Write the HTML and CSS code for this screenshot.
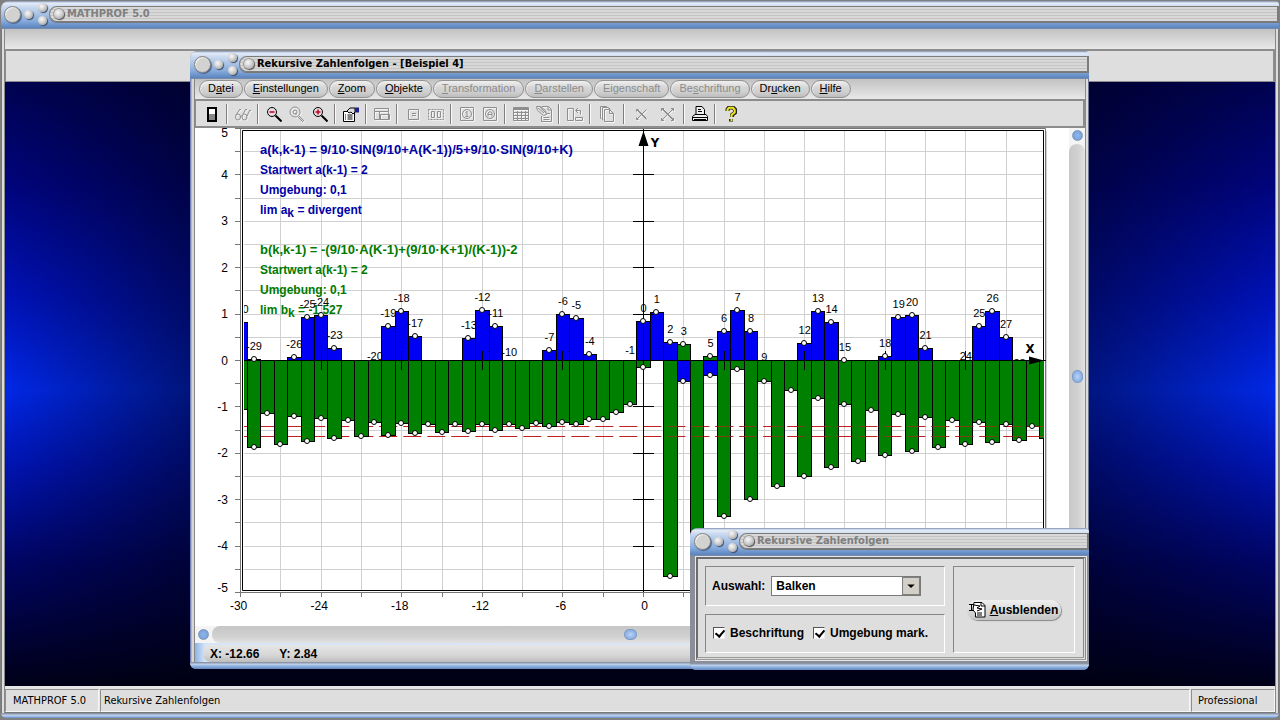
FILE: index.html
```html
<!DOCTYPE html>
<html lang="de">
<head>
<meta charset="utf-8">
<title>MATHPROF 5.0</title>
<link rel="stylesheet" href="styles.css">
</head>
<body>
<div class="desktop">
  <header class="titlebar inactive">
    <button class="orb big" aria-label="Schließen"></button>
    <button class="orb" aria-label="Minimieren"></button>
    <span class="orb-pair"><button class="orb" aria-label="Maximieren"></button><button class="orb" aria-label="Wiederherstellen"></button></span>
    <div class="caption"><span class="orb knob"></span><h1>MATHPROF 5.0</h1></div>
  </header>
  <div class="frame">
    <div class="menubar main-menu"></div>
    <div class="main-tools"></div>
    <main class="mdi"></main>
    <footer class="statusbar">
      <span class="cell first">MATHPROF 5.0</span>
      <span class="cell wide">Rekursive Zahlenfolgen</span>
      <span class="cell last">Professional</span>
    </footer>
  </div>
  <div class="window-foot"></div>
</div>

<section class="window plot-window">
  <header class="titlebar">
    <button class="orb big" aria-label="Schließen"></button>
    <button class="orb" aria-label="Minimieren"></button>
    <span class="orb-pair"><button class="orb" aria-label="Maximieren"></button><button class="orb" aria-label="Wiederherstellen"></button></span>
    <div class="caption"><span class="orb knob"></span><h2>Rekursive Zahlenfolgen - [Beispiel 4]</h2></div>
  </header>
  <div class="window-body">
    <nav class="menubar">
      <button>D<u>a</u>tei</button><button><u>E</u>instellungen</button><button><u>Z</u>oom</button><button><u>O</u>bjekte</button><button disabled><u>T</u>ransformation</button><button disabled><u>D</u>arstellen</button><button disabled>Ei<u>g</u>enschaft</button><button disabled>Be<u>s</u>chriftung</button><button>Dr<u>u</u>cken</button><button><u>H</u>ilfe</button>
    </nav>
    <div class="toolbar">
      <button aria-label="Beenden"><svg viewBox="0 0 16 16"><rect x="3" y="1" width="10" height="15" fill="#000"/><rect x="5" y="3" width="6" height="5" fill="#fff"/><rect x="5" y="8" width="6" height="6" fill="#888"/></svg></button>
      <i></i>
      <button aria-label="Anzeigen"><svg class="dim" viewBox="0 0 16 16"><ellipse cx="3" cy="11" rx="2.5" ry="3"/><ellipse cx="9.500" cy="11" rx="2.500" ry="3"/><path d="M1 9l4-6 1 1M8 8l3-5 1 1M5.500 10h1.500M12 10l3-6 1 1"/></svg></button>
      <i></i>
      <button aria-label="Verkleinern"><svg viewBox="0 0 16 16"><circle cx="6" cy="6" r="4.500" fill="#e8dce0" stroke="#000"/><path d="M3.500 6h5" stroke="#c00020" stroke-width="1.500"/><path d="M9.500 9.500l6 6" stroke="#000" stroke-width="2"/></svg></button>
      <button aria-label="Lupe"><svg class="dim" viewBox="0 0 16 16"><circle cx="6" cy="6" r="5"/><circle cx="6" cy="6" r="2"/><path d="M7 7v2M10 10l5 5M9 11l5 5"/></svg></button>
      <button aria-label="Vergrößern"><svg viewBox="0 0 16 16"><circle cx="6" cy="6" r="4.500" fill="#e8dce0" stroke="#000"/><path d="M3.500 6h5M6 3.500v5" stroke="#c00020" stroke-width="1.500"/><path d="M9.500 9.500l6 6" stroke="#000" stroke-width="2"/></svg></button>
      <i></i>
      <button aria-label="Eigenschaften"><svg viewBox="0 0 16 16"><path d="M.5 5.500h11v10H.5z" fill="#fff" stroke="#000"/><path d="M2 9h1M4.500 9h5M2 11h1M4.500 11h5M2 13h1M4.500 13h5" stroke="#000"/><path d="M4 5l3-3h5v4l-2 2-2-2-2 1-2-2" fill="#ddd" stroke="#000"/><path d="M12 1.500h4v5h-4z" fill="#20208c"/></svg></button>
      <i></i>
      <button aria-label="Fenster"><svg class="dim" viewBox="0 0 16 16"><path d="M.5 2.500h14v11H.5zM.5 5.500h14M5.500 5.500v8"/><path d="M6.500 8.500h9v5h-9z"/></svg></button>
      <i></i>
      <button aria-label="Punkt"><svg class="dim" viewBox="0 0 16 16"><path d="M3.500 3.500h10v10h-10zM7 7.500h4M7 9.500h4"/></svg></button>
      <button aria-label="Punktpaar"><svg class="dim" viewBox="0 0 16 16"><path d="M.5 3.500h15v10H.5z" stroke-dasharray="2 1"/><path d="M3.500 5.500h3v6h-3zM9.500 5.500h3v6h-3z"/></svg></button>
      <i></i>
      <button aria-label="Info"><svg class="dim" viewBox="0 0 16 16"><path d="M1.500 1.500h13v13h-13z"/><circle cx="8" cy="8" r="4.500"/><path d="M8 5v6M6.500 6.500L8 5.500M6.500 10.500h3"/></svg></button>
      <button aria-label="Text"><svg class="dim" viewBox="0 0 16 16"><path d="M1.500 1.500h13v13h-13z"/><circle cx="8" cy="8" r="4.500"/><path d="M6 10.500V7l2-1.500L10 7v3.500M6 8.500h4"/></svg></button>
      <i></i>
      <button aria-label="Tabelle"><svg class="dim" viewBox="0 0 16 16"><path d="M.5 1.500h15v13H.5z"/><path d="M1 3h14" stroke-width="2"/><path d="M1 6.500h14M1 9.500h14M1 12.500h14M4.500 5v9M8.500 5v9M12.500 5v9"/></svg></button>
      <button aria-label="Protokoll"><svg class="dim" viewBox="0 0 16 16"><path d="M6 .5h6.500l3 3v12H5.500V10"/><path d="M.5 .5h4l5 4 1 4-3 1-6-5zM2 2l6 5M4 1l6 6M7.500 11.500h6M7.500 13.500h6M12 1v3h3M11 7.500h3"/></svg></button>
      <i></i>
      <button aria-label="Drehen"><svg class="dim" viewBox="0 0 16 16"><path d="M.5 2.500h6v12h-6zM8.500 11.500h7v3h-7zM9 4.500h4.500v4M11 2L8.500 4.500 11 7"/></svg></button>
      <i></i>
      <button class="roomy" aria-label="Kopieren"><svg class="dim" viewBox="0 0 16 16"><path d="M2.500 12.500h-1V.5h6l2 2M4.500 14h-1V1.500h6l2 2M5.500 3.500h5l4 4v8h-9zM10.500 3.500v4h4"/></svg></button>
      <i></i>
      <button class="roomy" aria-label="Löschen"><svg class="dim" viewBox="0 0 16 16"><path d="M3.500 3.500l10 10M13.500 3.500l-10 10M4.500 3.500l9 9M3.500 5.500v-2h2M3.500 11.500v2h2"/></svg></button>
      <button class="roomy" aria-label="Alles löschen"><svg class="dim" viewBox="0 0 16 16"><path d="M2.500 2.500l12 12M14.500 2.500l-12 12M3.500 2.500l11 11M2.500 5v-2.500H5M12 2.500h2.500V5M2.500 12v2.500H5M12 14.500h2.500V12"/></svg></button>
      <i></i>
      <button aria-label="Drucken"><svg viewBox="0 0 16 16"><path d="M4 8V.5h6l2.500 3V8M.5 10.500L3 8.500h11l1.500 2v4H.5zM.5 11.500h15" fill="#eee" stroke="#000"/><path d="M6 3.500h3M6 5.500h4M2 13.500h12" stroke="#000"/></svg></button>
      <i></i>
      <button aria-label="Hilfe"><svg viewBox="0 0 16 16"><path d="M4.500 5V3.500L6 1.500h4l2 2v3L9 9v2M8 13v2.500" fill="none" stroke="#222" stroke-width="4"/><path d="M4.500 5V3.500L6 1.800h4l1.700 2v2.500L8.500 9v2M8.500 13v2" fill="none" stroke="#f0e818" stroke-width="2"/></svg></button>
    </div>
    <div class="plot-area">
      <svg class="chart" id="chart" viewBox="195 128 874 498" role="img" aria-label="Balkendiagramm rekursiver Zahlenfolgen"></svg>
      <div class="vscroll"><span class="ball"></span><div class="track"><span class="thumb"></span></div></div>
    </div>
    <div class="hscroll"><span class="ball"></span><div class="track"><span class="thumb"></span></div></div>
    <div class="coords"><div class="coords-pill"><span>X: -12.66</span><span>Y: 2.84</span></div></div>
  </div>
  <div class="window-foot"></div>
</section>

<section class="window dialog">
  <header class="titlebar inactive">
    <button class="orb big" aria-label="Schließen"></button>
    <button class="orb" aria-label="Minimieren"></button>
    <span class="orb-pair"><button class="orb" aria-label="Maximieren"></button><button class="orb" aria-label="Wiederherstellen"></button></span>
    <div class="caption"><span class="orb knob"></span><h2>Rekursive Zahlenfolgen</h2></div>
  </header>
  <form class="dialog-body">
    <div class="groups">
      <div class="group">
        <label for="kind">Auswahl:</label>
        <span class="select-box">
          <select id="kind"><option>Balken</option></select>
          <svg class="drop" viewBox="0 0 17 17"><path d="M.5 .5h16v16H.5z" fill="#d4d0c8" stroke="#808080"/><path d="M5 7h7L8.500 10.500z" fill="#000"/></svg>
        </span>
      </div>
      <div class="group">
        <input type="checkbox" id="lab" checked><label for="lab">Beschriftung</label>
        <input type="checkbox" id="env" checked><label for="env">Umgebung mark.</label>
      </div>
    </div>
    <div class="group side">
      <button type="button" class="hide-button"><svg viewBox="0 0 17 17"><path d="M5 1.500h8l3 3v11.500H6.500V12L4 9z" fill="#fff" stroke="#000"/><path d="M0 3.500h5M2.500 3.500v6M0 9.500h5M5 4l6 1-3 2 5 1-5 2M8 12h5M8 14h5M12 2v3h4" fill="none" stroke="#000"/></svg><span><u>A</u>usblenden</span></button>
    </div>
  </form>
  <div class="window-foot"></div>
</section>
<script src="chart.js"></script>
</body>
</html>
```

FILE: styles.css
```css
* { box-sizing: border-box; }
:root {
  --ui: "DejaVu Sans Condensed", "DejaVu Sans", sans-serif;
  --sans: "Liberation Sans", Arial, sans-serif;
  --face: #dedede;
}
body { margin: 0; height: 100vh; overflow: hidden; background: #808080; font: 11px/14px var(--sans); color: #000; }
button { font: inherit; color: inherit; margin: 0; }
h1, h2 { margin: 0; font: bold 11px/14px var(--ui); white-space: nowrap; }

.desktop { height: 100vh; padding: 1px 1px 2px 1px; display: flex; flex-direction: column; }
.frame { flex: 1; min-height: 0; display: flex; flex-direction: column; margin: 0; padding: 0 4px; background: linear-gradient(90deg, #777 0 1px, #ddd 1px 3px, #888 3px 4px, transparent 4px calc(100% - 4px), #888 calc(100% - 4px) calc(100% - 3px), #ddd calc(100% - 3px) calc(100% - 1px), #777 calc(100% - 1px)); }

.titlebar { flex: none; height: 28px; display: flex; align-items: center; padding: 0 0 2px 3px; border-radius: 8px 4px 0 0;
  background: linear-gradient(#7d8fb0 0, #e4edf9 2px, #c9d9ef 6px, #a9c2e4 13px, #86abdb 20px, #668fc8 25px, #5e83b8 27px, #8a93a4 28px); }
.orb { flex: none; width: 9px; height: 9px; padding: 0; border: 0; border-radius: 50%; background: radial-gradient(circle at 40% 35%, #f8f8f8, #d0d0d0 45%, #8c8c8c); box-shadow: 1px 1px 1px #3c4c68; }
.orb.big { width: 17px; height: 17px; margin-right: 3px; background: #d2d2d0; border: 1px solid #858585; box-shadow: inset 1px 1px 1px #f2f2f2, 1px 1px 1px #48608a; }
.orb-pair { display: flex; flex-direction: column; gap: 4px; margin: 0 2px 0 5px; }
.caption { flex: 1; min-width: 0; height: 16px; display: flex; align-items: center; gap: 3px; padding-left: 4px; border: 1px solid #7c7c7c; border-right-width: 2px; border-radius: 8px 0 0 8px; background: repeating-linear-gradient(#d8d8d8 0 2px, #c4c4c4 2px 3px); box-shadow: 0 1px 0 #777; }
.orb.knob { width: 10px; height: 10px; box-shadow: 1px 1px 1px #555, 0 0 0 1px #999; }
.inactive h1, .inactive h2 { color: #7f7f7f; }

.menubar { flex: none; height: 20px; display: flex; align-items: center; padding-left: 4px; background: linear-gradient(#c2c2c2, #e8e8e8); }
.menubar button { height: 18px; padding: 0 8px 2px; border: 1px solid #929292; border-radius: 9px; background: linear-gradient(#f0f0f0, #d6d6d6 40%, #cfcfcf 70%, #bdbdbd); box-shadow: inset 1px 1px 0 #eee; line-height: 14px; }
.menubar button + button { margin-left: 1px; }
.menubar button:disabled { color: #8c8c8c; }
.main-tools { flex: none; height: 33px; background: var(--face); border: 2px solid #8c8c8c; border-bottom-width: 1px; border-left-width: 1px; }
.mdi { flex: 1; min-height: 0; background:
  linear-gradient(90deg, rgba(0, 0, 12, 0) 0, rgba(0, 0, 12, .5) 15%, rgba(0, 0, 12, .5) 84%, rgba(0, 0, 12, 0) 100%),
  linear-gradient(#000250 0, #00047c 17%, #0012b8 36%, #0028e6 51%, #0014b4 63%, #000462 80%, #000018 100%); }
.statusbar { flex: none; height: 27px; display: flex; gap: 1px; padding: 3px 0 0; background: #e6e6e6; border-bottom: 1px solid #777; font: 11px/14px var(--ui); }
.cell { display: flex; align-items: center; background: var(--face); border: 1px solid #909090; border-color: #909090 #f6f6f6 #f6f6f6 #909090; padding: 0 6px; white-space: nowrap; }
.cell.first { width: 94px; padding-left: 7px; }
.cell.wide { flex: 1; padding-left: 3px; }
.cell.last { width: 84px; }
.window-foot { flex: none; height: 7px; border-radius: 0 0 6px 6px; background: linear-gradient(#8b95a8 0 1px, #c3d7f0 2px, #92b3df 4px, #6288bf); }
.desktop .window-foot { height: 5px; }

.window { position: absolute; display: flex; flex-direction: column; border-radius: 8px 6px 6px 6px; background: #8b8d98; }
.plot-window { left: 190px; top: 51px; width: 899px; height: 618px; }
.window .titlebar { padding-left: 4px; }
.window-body { flex: 1; min-height: 0; display: flex; flex-direction: column; padding: 0 4px 0 5px; background: linear-gradient(90deg, #7482b8 0 1px, #aeb4cc 1px 2px, #d6d6d6 2px 4px, #868686 4px 5px, transparent 5px calc(100% - 4px), #8a8a8a calc(100% - 4px) calc(100% - 3px), #ddd calc(100% - 3px) calc(100% - 1px), #6c7694 calc(100% - 1px)); }
.toolbar { flex: none; height: 29px; display: flex; align-items: center; padding: 0 0 0 4px; background: var(--face); border: solid #8c8c8c; border-width: 2px 2px 2px 1px; }
.toolbar button { flex: none; width: 23px; height: 22px; padding: 0; border: 0; background: none; display: flex; align-items: center; justify-content: center; }
.toolbar .roomy { width: 26px; }
.toolbar svg { width: 16px; height: 16px; }
.toolbar i { flex: none; width: 8px; height: 20px; background: linear-gradient(90deg, transparent 3px, #7e7e7e 3px 4px, #fafafa 4px 5px, transparent 5px); }
.dim { fill: none; stroke: #8e8e8e; filter: drop-shadow(1px 1px 0 #f4f4f4); }
.plot-area { flex: 1; min-height: 0; display: flex; background: #fff; }
.chart { flex: 1; min-width: 0; height: 100%; display: block; }
.vscroll { flex: none; width: 16px; display: flex; flex-direction: column; align-items: center; padding-top: 2px; gap: 3px; background: #f4f4f4; }
.vscroll .track { flex: 1; width: 100%; display: flex; justify-content: center; align-items: center; border-radius: 8px 8px 0 0; background: linear-gradient(90deg, #c8c8c8, #d2d2d2 60%, #e2e2e2); }
.ball { flex: none; width: 11px; height: 11px; border-radius: 50%; border: 1px solid #8296b4; background: radial-gradient(#8db8ee, #7099d4); }
.thumb { width: 11px; height: 13px; border-radius: 5px; border: 1px solid #7f9cc6; background: radial-gradient(#b8d4f8, #779fd8); }
.vscroll .track { padding-bottom: 18px; }
.hscroll { flex: none; height: 17px; display: flex; align-items: center; padding-left: 3px; gap: 3px; background: #f4f4f4; }
.hscroll .track { flex: 1; height: 100%; display: flex; align-items: center; justify-content: center; padding-right: 36px; border-radius: 8px 0 0 8px; background: linear-gradient(#c6c6c6, #d0d0d0 60%, #e2e2e2); }
.hscroll .thumb { width: 13px; height: 11px; }
.coords { flex: none; height: 19px; padding: 2px 0 0 8px; background: linear-gradient(90deg, #8fb4e4, #d5e5f7 10px, #dce6f2); }
.coords-pill { height: 17px; display: flex; align-items: center; gap: 20px; padding-left: 7px; border-radius: 8px 0 0 8px; background: linear-gradient(#e6e6e6, #d6d6d6 60%, #bdbdbd); font: bold 12px/14px var(--sans); }

.dialog { left: 690px; top: 528px; width: 399px; height: 142px; }
.dialog-body { flex: 1; min-height: 0; display: flex; gap: 8px; margin: 1px 3px 3px 6px; padding: 7px 8px 4px 7px; background: var(--face); border: 2px solid #6c6c6c; border-right: 3px double #888; border-bottom: 3px double #999; outline: 1px solid #e8e8e8; font: bold 12px/14px var(--sans); }
.groups { flex: 1; display: flex; flex-direction: column; gap: 8px; }
.group { flex: 1; display: flex; align-items: center; padding-left: 6px; border: 1px solid #868686; border-right-color: #fff; border-bottom-color: #fff; white-space: nowrap; }
.group.side { flex: none; width: 122px; padding: 0; justify-content: center; }
.select-box { position: relative; width: 150px; height: 20px; margin-left: 6px; }
.select-box select { appearance: none; width: 100%; height: 20px; padding: 0 4px; border: 1px solid #7a7a7a; border-radius: 0; background: #fff; color: #000; font: inherit; }
.drop { position: absolute; right: 1px; top: 1px; width: 18px; height: 18px; pointer-events: none; }
.group input { appearance: none; width: 12px; height: 12px; margin: 0 5px 0 1px; border: 1px solid #555; border-color: #555 #eee #eee #555; background: #fff; position: relative; }
.group input:checked::after { content: ""; position: absolute; left: 3px; top: 0; width: 4px; height: 7px; border: solid #000; border-width: 0 2px 2px 0; transform: rotate(40deg); }
.group label + input { margin-left: 9px; }
.hide-button { display: flex; align-items: center; gap: 4px; height: 20px; padding: 0 3px 0 2px; border: 0; border-radius: 10px; background: linear-gradient(#f0f0f0, #dadada 50%, #c4c4c4); box-shadow: 1px 1px 1px #888; }
.hide-button svg { width: 17px; height: 17px; }

.chart text { font: 11px var(--sans); text-anchor: middle; }
.chart .scale text { font-size: 12px; }
.chart .rows text { text-anchor: end; }
.chart .formula { font: bold 12px var(--sans); text-anchor: start; }
.chart .long { font-size: 13px; }
.chart .a { fill: #0000a8; }
.chart .b { fill: #007a00; }
.chart .name { font: bold 13px var(--ui); }
.grid { stroke: #d0d0d0; }
.ticks { stroke: #777; }
.axis { stroke: #000; }
.blue { fill: #0000f4; stroke: #000; }
.green { fill: #008000; stroke: #000; }
.dot { fill: #fff; stroke: #000; }
.limit { stroke: #c02020; stroke-dasharray: 18 6; }
```

FILE: chart.js
```js
const X0 = 643.5, DX = 13.43, Y0 = 360.5, DY = 46.4;
const L = 244, R = 1043;
const px = k => X0 + k * DX;
const line = (x1, y1, x2, y2) => `<path d="M${x1} ${y1}L${x2} ${y2}"/>`;
const snap = v => Math.floor(v) + 0.5;

// Bar ends in drawing units, keyed by sequence index.
const a = { '-30': 322, '-29': 359, '-26': 357, '-25': 317, '-24': 315, '-23': 348, '-19': 326, '-18': 311, '-17': 336, '-13': 338, '-12': 310, '-11': 326, '-7': 350, '-6': 314, '-5': 318, '-4': 354, 0: 321, 1: 312, 2: 342, 3: 381, 5: 375, 6: 331, 7: 310, 8: 331, 12: 343, 13: 311, 14: 322, 15: 360, 18: 356, 19: 317, 20: 315, 21: 348, 25: 326, 26: 311, 27: 337 };
const b = [409, 447, 413, 444, 416, 441, 418, 438, 420, 436, 422, 435, 423, 433, 424, 432, 424, 431, 424, 430, 424, 428, 423, 426, 422, 424, 419, 419, 412, 404, 367, null, 576, 344, 640, 356, 516, 369, 499, 381, 486, 390, 476, 398, 467, 404, 461, 410, 455, 414, 451, 417, 447, 420, 444, 422, 442, 424, 440, 426, 438];

let grid = '', ticks = '', axis = '', bars = '', dots = '', labels = '';
for (let k = -30; k <= 30; k += 3) {
  const x = snap(px(k));
  grid += line(x, 131, x, 590);
  ticks += line(x, 592, x, 597);
}
for (let v = -10; v <= 10; v++) {
  const y = snap(Y0 - v * DY / 2);
  grid += line(L, y, R, y);
  ticks += line(235, y, 241, y);
}
for (let v = -4; v <= 4; v++) if (v) axis += line(633, snap(Y0 - v * DY), 654, snap(Y0 - v * DY));

const bar = (k, y, cls) => {
  const x1 = snap(px(k - 0.5)), x2 = snap(px(k + 0.5));
  bars += `<rect class="${cls}" x="${x1}" y="${Math.min(y, 360) + 0.5}" width="${x2 - x1}" height="${Math.abs(360 - y)}"/>`;
  if (Math.abs(k) < 30) dots += `<circle class="dot" cx="${Math.floor(px(k))}" cy="${y}" r="2.500"/>`;
};
for (const k in a) {
  bar(+k, a[k], 'blue');
  if (k !== '3' && k !== '5') labels += `<text x="${px(+k)}" y="${a[k] - 9}">${k}</text>`;
}
for (const [k, y] of [[-20, 360], [-16, 368], [-10, 356], [-1, 354], [3, 335], [5, 347], [9, 361], [24, 360], [28, 367]])
  labels += `<text x="${px(k)}" y="${y}">${k}</text>`;
const blueBars = bars;
bars = '';
b.forEach((y, i) => { if (y !== null) bar(i - 30, y, 'green'); });

let xt = '';
for (let k = -30; k <= 30; k += 6) {
  if (k && k < 30 && k > -30) axis += line(snap(px(k)), 351, snap(px(k)), 370);
  if (k <= 0) xt += `<text x="${px(k) - (k ? 2 : -1)}" y="610">${k}</text>`;
}
let yt = '';
for (let v = -5; v <= 5; v++)
  yt += `<text x="228" y="${Y0 - v * DY + (v === 5 ? 8 : v === -5 ? -1 : 4)}">${v}</text>`;

const f = (cls, y, t) => `<text class="formula ${cls}" x="260" y="${y}">${t}</text>`;
document.getElementById('chart').innerHTML = `
<defs><clipPath id="plot"><rect x="${L}" y="131" width="${R - L + 1}" height="460"/></clipPath>
<clipPath id="upper"><rect x="${L}" y="131" width="${R - L + 1}" height="230"/></clipPath></defs>
<g class="grid">${grid}</g><g class="ticks">${ticks}</g>
<path d="M240.500 597V128.500H1045.500V592.500H237" fill="none" stroke="#777"/>
<path d="M242.500 130.500H1043.500V590.500H242.500z" fill="none" stroke="#000"/>
<g class="limit" clip-path="url(#plot)"><path d="M235.300 426.500H1044M235.300 436.500H1044"/></g>
<g clip-path="url(#plot)">${blueBars}</g>
${f('a long', 154, 'a(k,k-1) = 9/10·SIN(9/10+A(K-1))/5+9/10·SIN(9/10+K)')}
${f('a', 174, 'Startwert a(k-1) = 2')}
${f('a', 194, 'Umgebung: 0,1')}
${f('a', 214, 'lim a<tspan dy="3">k</tspan><tspan dy="-3">&#160;= divergent</tspan>')}
${f('b long', 254, 'b(k,k-1) = -(9/10·A(K-1)+(9/10·K+1)/(K-1))-2')}
${f('b', 274, 'Startwert a(k-1) = 2')}
${f('b', 294, 'Umgebung: 0,1')}
${f('b', 314, 'lim b<tspan dy="3">k</tspan><tspan dy="-3">&#160;= -1,527</tspan>')}
<g clip-path="url(#plot)">${bars}
<g class="limit" opacity=".6"><path d="M667.300 426.500H1044M667.300 436.500H1044"/></g></g>
<g class="axis">${axis}${line(643.5, 129, 643.5, 592)}${line(L, 360.5, 1046, 360.5)}</g>
<g clip-path="url(#upper)">${labels}</g>
<g clip-path="url(#plot)">${dots}</g>
<path d="M643.500 131l5 15h-10zM1044 360.500l-15-4v8z"/>
<text class="name" x="655" y="147">Y</text><text class="name" x="1030" y="353">X</text>
<g class="scale">${xt}</g><g class="scale rows">${yt}</g>`;
```
